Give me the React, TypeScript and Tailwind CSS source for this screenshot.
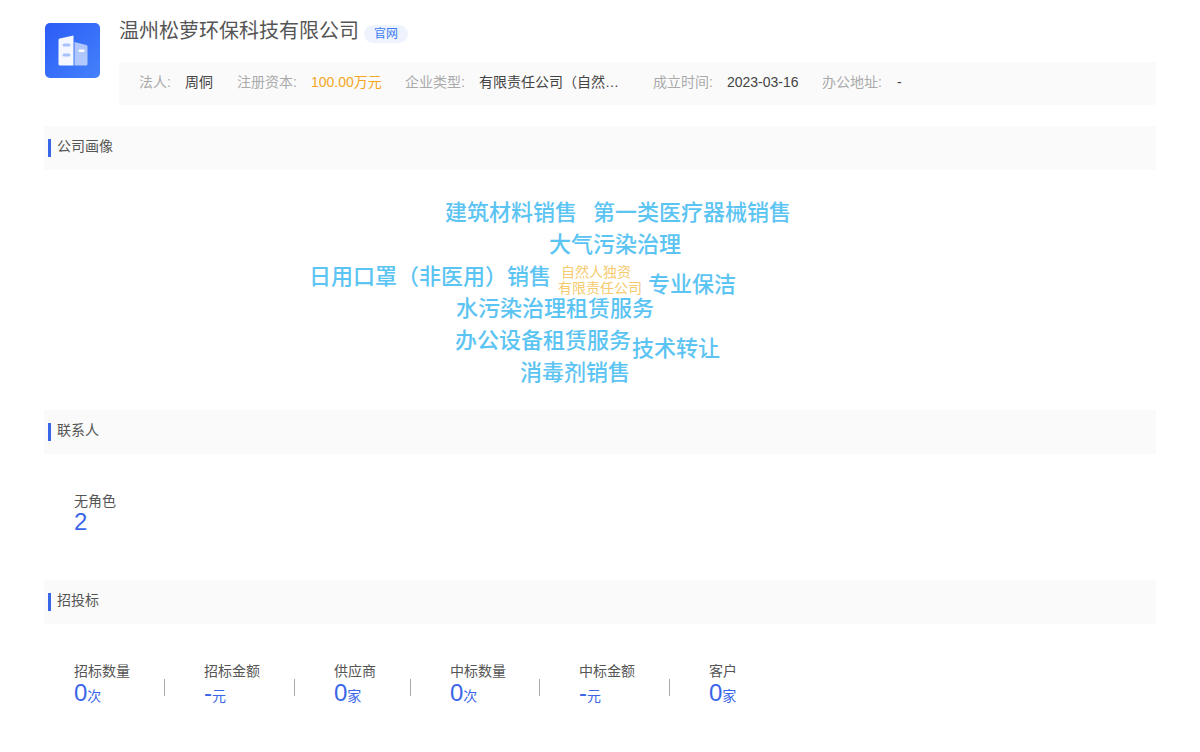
const font = "font-['Liberation_Sans','Noto_Sans_CJK_SC',sans-serif]";

const info = [
	{ label: "法人:", value: "周侗", w: "w-[98px]", color: "ml-3.5 text-[#444]" },
	{ label: "注册资本:", value: "100.00万元", w: "w-[168px]", color: "ml-3.5 text-[#f5a623]" },
	{ label: "企业类型:", value: "有限责任公司（自然…", w: "w-[248px]", color: "ml-3.5 text-[#444]" },
	{ label: "成立时间:", value: "2023-03-16", w: "w-[169px]", color: "ml-3.5 text-[#444]" },
	{ label: "办公地址:", value: "-", w: "w-auto", color: "ml-[15px] text-[#444]" },
];

const cloud = [
	{ text: "建筑材料销售", left: 401, top: 28 },
	{ text: "第一类医疗器械销售", left: 549, top: 28 },
	{ text: "大气污染治理", left: 505, top: 60 },
	{ text: "日用口罩（非医用）销售", left: 265, top: 92 },
	{ text: "专业保洁", left: 604, top: 100 },
	{ text: "水污染治理租赁服务", left: 412, top: 124 },
	{ text: "办公设备租赁服务", left: 411, top: 156 },
	{ text: "技术转让", left: 588, top: 164 },
	{ text: "消毒剂销售", left: 476, top: 188 },
];

const stats = [
	{ label: "招标数量", value: "0", unit: "次", w: "w-[130px]" },
	{ label: "招标金额", value: "-", unit: "元", w: "w-[130px]" },
	{ label: "供应商", value: "0", unit: "家", w: "w-[116px]" },
	{ label: "中标数量", value: "0", unit: "次", w: "w-[129px]" },
	{ label: "中标金额", value: "-", unit: "元", w: "w-[130px]" },
	{ label: "客户", value: "0", unit: "家", w: "w-auto" },
];

const SectionTitle = ({ title }: { title: string }) => (
	<div className="flex h-[44px] items-start bg-[#fafafa] pl-1 pt-[13px]">
		<span className="h-[18px] w-[3px] bg-[#3a66e8]" />
		<span className="ml-1.5 text-[14px] leading-[14px] text-[#555]">{title}</span>
	</div>
);

const Logo = () => (
	<div className="ml-px mt-[23px] flex h-[55px] w-[55px] shrink-0 items-center justify-center rounded-[5px] bg-gradient-to-br from-[#2c5bf6] to-[#4481fb]">
		<svg width="32" height="32" viewBox="0 0 32 32">
			<path d="M1.5 5a1.5 1.5 0 0 1 1.2-1.5L16.5 .5v30H3a1.5 1.5 0 0 1-1.5-1.5z" fill="#fff" fillOpacity="0.95" />
			<path d="M17.5 7l11.8 3a1.5 1.5 0 0 1 1.2 1.5V29a1.5 1.5 0 0 1-1.5 1.5H17.5z" fill="#fff" fillOpacity="0.6" />
			<rect x="5.5" y="8.5" width="8" height="3" rx="1.5" fill="#a9c2fb" />
			<rect x="5.5" y="18.5" width="8" height="3" rx="1.5" fill="#a9c2fb" />
			<rect x="21.5" y="14.5" width="6" height="2.5" rx="1" fill="#fff" />
		</svg>
	</div>
);

export default function App() {
	return (
		<div className={`${font} w-[1200px] h-[752px] overflow-hidden bg-white pl-[44px] pr-[44px]`}>
			<div className="flex h-[126px] items-start">
				<Logo />
				<div className="ml-[19px] flex-1 pt-[19px]">
					<div className="flex h-[24px] items-center">
						<span className="text-[20px] leading-[24px] text-[#555]">温州松萝环保科技有限公司</span>
						<span className="ml-[5px] mt-[5px] flex h-[18px] w-[44px] items-center justify-center rounded-full bg-[#eef3fe] text-[12px] text-[#3a7bf0]">
							官网
						</span>
					</div>
					<div className="mt-[19px] flex h-[43px] items-center bg-[#fafafa] pb-0.5 pl-5 text-[14px]">
						{info.map((item) => (
							<div key={item.label} className={`flex shrink-0 items-center ${item.w}`}>
								<span className="text-[#aaa]">{item.label}</span>
								<span className={item.color}>{item.value}</span>
							</div>
						))}
					</div>
				</div>
			</div>

			<SectionTitle title="公司画像" />
			<div className="relative h-[240px]">
				{cloud.map((word) => (
					<span
						key={word.text}
						className="absolute whitespace-nowrap text-[22px] font-medium leading-[30px] text-[#5cc4f2]"
						style={{ left: word.left, top: word.top }}
					>
						{word.text}
					</span>
				))}
				<span className="absolute left-[517px] top-[94px] whitespace-nowrap text-[14px] leading-[16px] text-[#f6cb6e]">
					自然人独资
				</span>
				<span className="absolute left-[514px] top-[110px] whitespace-nowrap text-[14px] leading-[16px] text-[#f6cb6e]">
					有限责任公司
				</span>
			</div>

			<SectionTitle title="联系人" />
			<div className="h-[126px] pl-[30px] pt-[39px]">
				<div className="text-[14px] leading-[16px] text-[#555]">无角色</div>
				<div className="text-[24px] leading-[26px] text-[#3a66e8]">2</div>
			</div>

			<SectionTitle title="招投标" />
			<div className="flex pl-[30px] pt-[39px]">
				{stats.map((stat, i) => (
					<div key={stat.label} className={`relative shrink-0 ${stat.w}`}>
						<div className="text-[14px] leading-[16px] text-[#555]">{stat.label}</div>
						<div className="flex h-[28px] items-baseline text-[#3a66e8]">
							<span className="text-[24px] leading-[28px]">{stat.value}</span>
							<span className="text-[14px]">{stat.unit}</span>
						</div>
						{i < stats.length - 1 && (
							<span className="absolute right-[39px] top-[16px] h-[17px] w-px bg-[#aaa]" />
						)}
					</div>
				))}
			</div>
		</div>
	);
}
